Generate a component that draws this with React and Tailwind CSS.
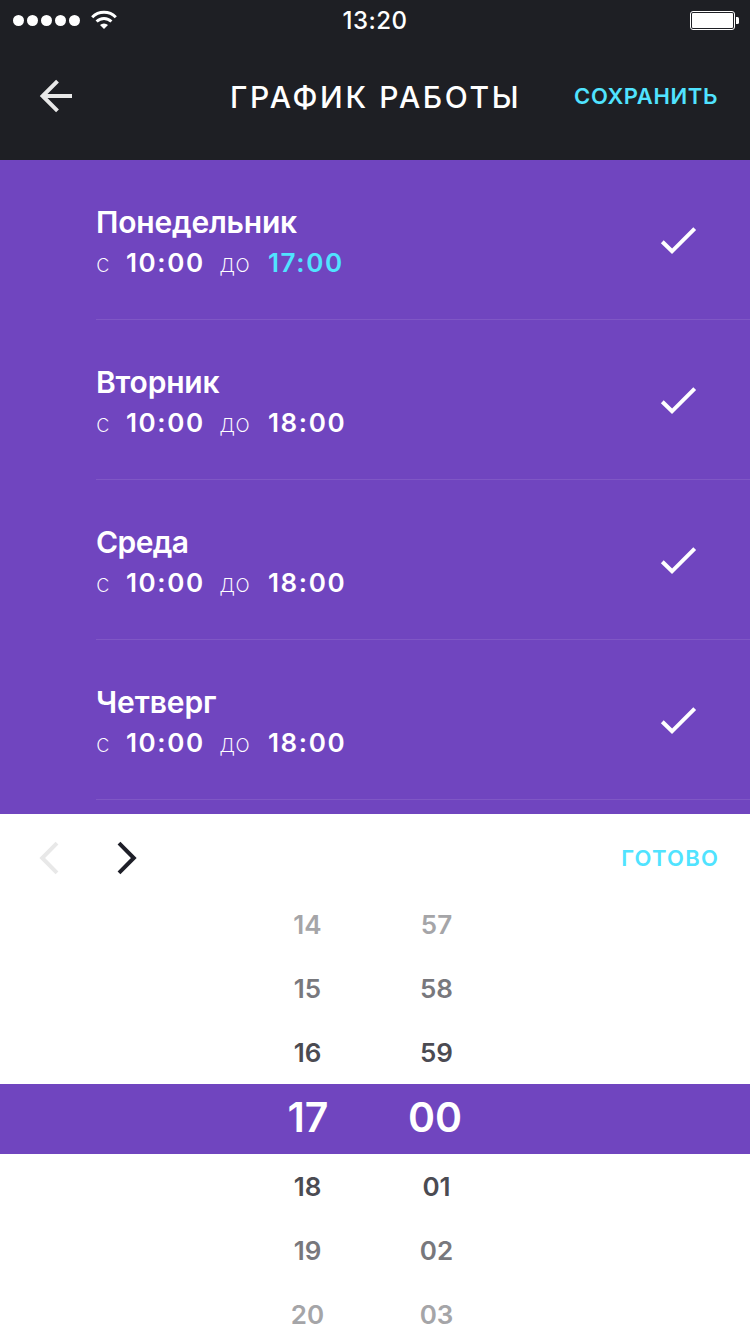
const days = [
  { name: 'Понедельник', track: 'tracking-[-0.2px]', from: '10:00', to: '17:00', active: true },
  { name: 'Вторник', track: 'tracking-[-0.2px]', from: '10:00', to: '18:00' },
  { name: 'Среда', track: 'tracking-[-0.6px]', from: '10:00', to: '18:00' },
  { name: 'Четверг', track: 'tracking-[-0.1px]', from: '10:00', to: '18:00' },
];

const before = [
  { h: '14', m: '57', color: 'text-[#a5a5a8]' },
  { h: '15', m: '58', color: 'text-[#78787d]' },
  { h: '16', m: '59', color: 'text-[#4b4b52]' },
];

const after = [
  { h: '18', m: '01', color: 'text-[#4b4b52]' },
  { h: '19', m: '02', color: 'text-[#78787d]' },
  { h: '20', m: '03', color: 'text-[#a5a5a8]' },
];

function StatusBar() {
  return (
    <div className="flex h-10 items-center justify-between pl-[13px] pr-[11px]">
      <div className="flex w-[200px] items-center">
        <div className="flex gap-[3px]">
          {[0, 1, 2, 3, 4].map((i) => (
            <span key={i} className="size-[11px] rounded-full bg-white" />
          ))}
        </div>
        <svg className="ml-[11px]" width="26" height="20" viewBox="0 0 26 20" fill="none" stroke="#fff">
          <path d="M1.200 7.200a16.600 16.600 0 0 1 23.600 0" strokeWidth="3" />
          <path d="M5.600 11.600a10.400 10.400 0 0 1 14.800 0" strokeWidth="2.9" />
          <path d="M13 19l-4-3.900a5.700 5.700 0 0 1 8 0z" fill="#fff" stroke="none" />
        </svg>
      </div>
      <span className="pr-[2px] pt-[2px] text-[24px] font-medium leading-10 tracking-[0.5px]">13:20</span>
      <div className="flex w-[200px] justify-end">
        <svg width="49" height="19" viewBox="0 0 49 19">
          <rect x="0.5" y="0.5" width="44" height="18" rx="2.5" fill="none" stroke="#fff" />
          <rect x="2" y="2" width="41" height="15" rx="1" fill="#fff" />
          <path d="M46 6h1.500q1.500 0 1.500 1.500v4q0 1.500-1.500 1.500h-1.500z" fill="#fff" />
        </svg>
      </div>
    </div>
  );
}

function Day({ name, track, from, to, active }) {
  return (
    <div className="ml-24 flex h-40 shrink-0 items-start justify-between border-b border-[#7f57c5] pr-[53px]">
      <div className="pt-[41px]">
        <div className={`text-[30px] font-semibold leading-[42px] ${track}`}>{name}</div>
        <div className="flex h-[40px] items-center text-[26px] font-semibold leading-[38px] tracking-[1.6px]">
          <span className="w-[30px] text-[25px] font-extralight tracking-normal">с</span>
          <span className="w-[94px]">{from}</span>
          <span className="w-[48px] text-[25px] font-extralight tracking-[0.4px]">до</span>
          <span className={active ? 'text-[#50e3ff]' : 'text-white'}>{to}</span>
        </div>
      </div>
      <svg className="mt-[66px]" width="38" height="30" viewBox="0 0 38 30" fill="none" stroke="#fff" strokeWidth="4">
        <path d="M3.300 15.800L13 25.300L35.700 2.600" />
      </svg>
    </div>
  );
}

function WheelRow({ h, m, color }) {
  return (
    <div className={`flex h-16 text-center text-[26px] font-semibold leading-16 ${color}`}>
      <span className="ml-[257.5px] w-[100px]">{h}</span>
      <span className="ml-[29px] w-[100px]">{m}</span>
    </div>
  );
}

export default function App() {
  return (
    <div className="flex h-[1334px] w-[750px] flex-col overflow-hidden bg-white font-['Inter',sans-serif] text-white">
      <header className="h-40 shrink-0 bg-[#1e1f24]">
        <StatusBar />
        <div className="flex h-[112px] items-center pl-[39px] pr-8">
          <div className="w-[145px]">
            <svg width="34" height="34" viewBox="0 0 34 34" fill="none" stroke="#e8e8e8" strokeWidth="4">
              <path d="M18.500 2.200L3.600 17L18.500 31.800M3 17H33" />
            </svg>
          </div>
          <h1 className="ml-[46px] whitespace-nowrap pt-[2px] text-[30px] font-medium leading-none tracking-[2.65px]">ГРАФИК РАБОТЫ</h1>
          <button className="ml-auto whitespace-nowrap text-[22px] font-semibold leading-none tracking-[0.6px] text-[#50e3ff]">СОХРАНИТЬ</button>
        </div>
      </header>
      <main className="flex h-[654px] shrink-0 flex-col overflow-hidden bg-[#7045bf]">
        {days.map((d) => (
          <Day key={d.name} {...d} />
        ))}
      </main>
      <section className="h-[520px] shrink-0 overflow-hidden">
        <div className="flex h-[79px] items-center pl-[38px] pr-[31px] pt-[9px]">
          <svg width="22" height="34" viewBox="0 0 22 34" fill="none" stroke="#e8e8e8" strokeWidth="4">
            <path d="M19 2.200L4.200 17L19 31.800" />
          </svg>
          <svg className="ml-[56px]" width="22" height="34" viewBox="0 0 22 34" fill="none" stroke="#1e1f28" strokeWidth="4">
            <path d="M3 2.200L17.800 17L3 31.800" />
          </svg>
          <button className="ml-auto text-[22px] font-semibold leading-none tracking-[1.2px] text-[#50e3ff]">ГОТОВО</button>
        </div>
        <div className="h-[191px]">
          {before.map((r) => (
            <WheelRow key={r.h} {...r} />
          ))}
        </div>
        <div className="flex h-[70px] bg-[#7045bf] text-center text-[41px] font-semibold leading-[67px]">
          <span className="ml-[258px] w-[100px]">17</span>
          <span className="ml-[27px] w-[100px]">00</span>
        </div>
        <div className="pt-px">
          {after.map((r) => (
            <WheelRow key={r.h} {...r} />
          ))}
        </div>
      </section>
    </div>
  );
}
